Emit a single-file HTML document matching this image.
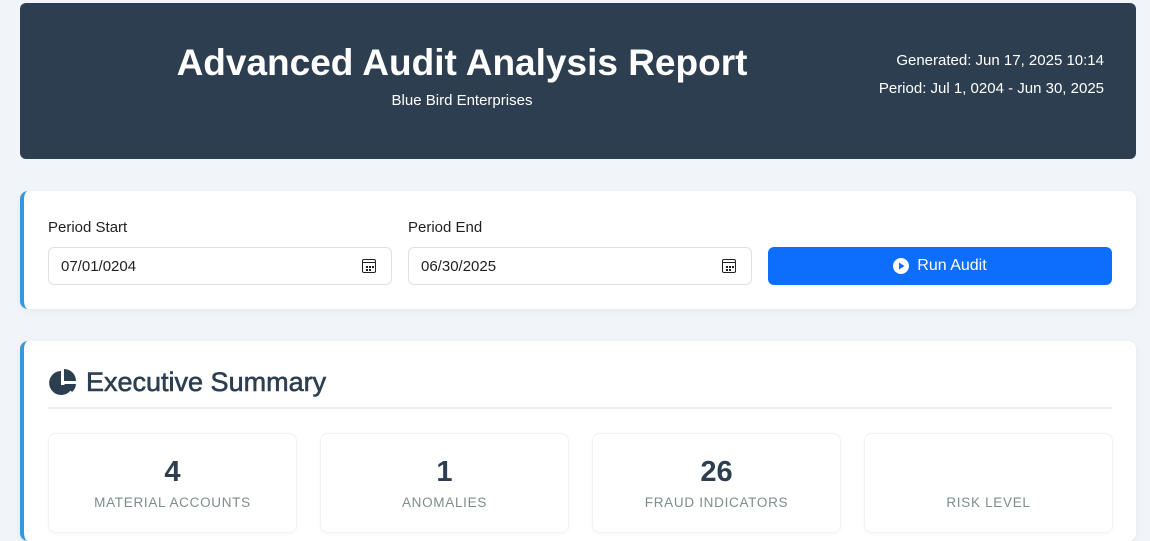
<!DOCTYPE html>
<html><head><style>
*{box-sizing:border-box;margin:0;padding:0}
body{width:1150px;height:529px;overflow:hidden;background:#f1f4f8;font-family:"Liberation Sans",sans-serif;position:relative}
.hdr{position:absolute;left:20px;top:3px;width:1116px;height:156px;background:#2d3e50;border-radius:6px;color:#fff}
.hdr h1{position:absolute;left:0;width:884px;text-align:center;top:39px;font-size:37px;font-weight:bold;}
.hdr .sub{position:absolute;left:0;width:884px;text-align:center;top:89px;font-size:15px}
.hdr .r{position:absolute;right:32px;top:44px;text-align:right;font-size:15px;line-height:28px}
.card{position:absolute;left:20px;width:1116px;background:#fff;border-radius:8px;border-left:4px solid #3498db;box-shadow:0 2px 8px rgba(0,0,0,.05)}
.lbl{position:absolute;font-size:15px;color:#222;top:28px}
.inp{position:absolute;top:56px;width:344px;height:38px;border:1px solid #dee2e6;border-radius:6px;font-size:15px;padding:10px 12px;color:#222}
.cal{position:absolute;right:15px;top:11px;width:14px;height:14px;border:1.5px solid #222;border-radius:2px}
.cal:before{content:"";position:absolute;left:0;right:0;top:2px;border-top:1.5px solid #222}
.cal:after{content:"";position:absolute;left:3px;top:6px;width:2px;height:2px;background:#222;box-shadow:3px 0 #222,6px 0 #222,0 3px #222,3px 3px #222}
.btn{position:absolute;left:744px;top:56px;width:344px;height:38px;background:#0d6efd;border-radius:6px;color:#fff;font-size:16px;display:flex;align-items:center;justify-content:center;gap:8px}
.stat{position:absolute;top:92px;width:249px;height:100px;border:1px solid #f0f2f4;border-radius:8px;box-shadow:0 1px 4px rgba(0,0,0,.04);text-align:center}
.stat b{display:block;margin-top:22px;font-size:29px;color:#2d3e50;height:36px}
.stat span{display:block;margin-top:3px;font-size:13.5px;letter-spacing:.7px;color:#7f8c8d}
</style></head><body>
<div class="hdr"><h1>Advanced Audit Analysis Report</h1><div class="sub">Blue Bird Enterprises</div>
<div class="r">Generated: Jun 17, 2025 10:14<br>Period: Jul 1, 0204 - Jun 30, 2025</div></div>
<div class="card" style="top:191px;height:118px">
<div class="lbl" style="left:24px">Period Start</div><div class="inp" style="left:24px">07/01/0204<i class="cal"></i></div>
<div class="lbl" style="left:384px">Period End</div><div class="inp" style="left:384px">06/30/2025<i class="cal"></i></div>
<div class="btn"><svg width="16" height="16" viewBox="0 0 16 16"><circle cx="8" cy="8" r="8" fill="#fff"/><path d="M6 4.5v7l5.5-3.5z" fill="#0d6efd"/></svg>Run Audit</div>
</div>
<div class="card" style="top:341px;height:200px">
<svg style="position:absolute;left:24px;top:28px" width="30" height="28" viewBox="0 0 30 28"><path d="M13 2A12 12 0 1 0 25 16H13z" fill="#2d3e50"/><path d="M16 0A12 12 0 0 1 28 12H16z" fill="#2d3e50"/><path d="M16 15h12a12 12 0 0 1-4 8z" fill="#2d3e50"/></svg>
<div style="position:absolute;left:62px;top:26px;font-size:27px;color:#2d3e50;-webkit-text-stroke:.6px #2d3e50">Executive Summary</div>
<div style="position:absolute;left:24px;top:66px;width:1064px;border-top:2px solid #eceef0"></div>
<div class="stat" style="left:24px"><b>4</b><span>MATERIAL ACCOUNTS</span></div>
<div class="stat" style="left:296px"><b>1</b><span>ANOMALIES</span></div>
<div class="stat" style="left:568px"><b>26</b><span>FRAUD INDICATORS</span></div>
<div class="stat" style="left:840px"><b></b><span>RISK LEVEL</span></div>
</div>
</body></html>
